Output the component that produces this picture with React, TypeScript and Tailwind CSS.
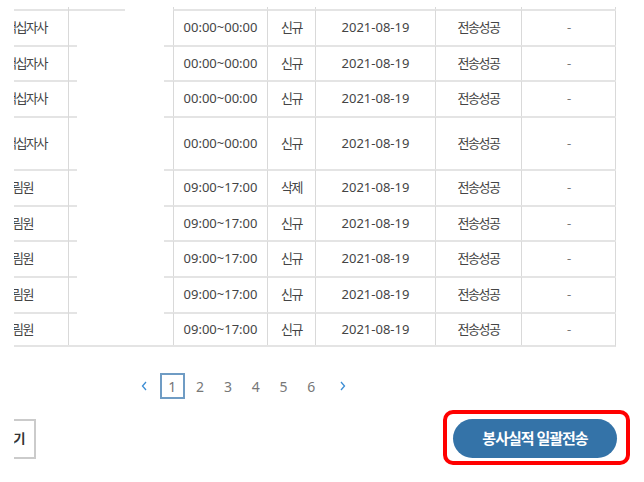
import React from "react";

type Row = { org: string; time: string; kind: string; h: string; pr: string; first?: boolean };

const rows: Row[] = [
  { org: "대한적십자사", time: "00:00~00:00", kind: "신규", h: "h-[36px]", pr: "pr-[21px]", first: true },
  { org: "대한적십자사", time: "00:00~00:00", kind: "신규", h: "h-[35px]", pr: "pr-[21px]" },
  { org: "대한적십자사", time: "00:00~00:00", kind: "신규", h: "h-[36px]", pr: "pr-[21px]" },
  { org: "대한적십자사", time: "00:00~00:00", kind: "신규", h: "h-[53px]", pr: "pr-[21px]" },
  { org: "효림원", time: "09:00~17:00", kind: "삭제", h: "h-[36px]", pr: "pr-[35px]" },
  { org: "효림원", time: "09:00~17:00", kind: "신규", h: "h-[35px]", pr: "pr-[35px]" },
  { org: "효림원", time: "09:00~17:00", kind: "신규", h: "h-[36px]", pr: "pr-[35px]" },
  { org: "효림원", time: "09:00~17:00", kind: "신규", h: "h-[36px]", pr: "pr-[35px]" },
  { org: "효림원", time: "09:00~17:00", kind: "신규", h: "h-[35px]", pr: "pr-[35px]" },
];

const cols = "grid grid-cols-[54px_105px_94px_48px_120px_86px_95px] border-r border-[#d9d9d9]";
const cell = "flex items-center justify-center border-l border-t-2 border-t-[#e4e4e4] border-l-[#d9d9d9]";
const ko = "tracking-[-1.5px]";

const Chevron = ({ left }: { left?: boolean }) => (
  <svg width="6" height="10" viewBox="0 0 6 10" className="text-[#3b8dd4]">
    <path d={left ? "M5 1 L1.5 5 L5 9" : "M1 1 L4.5 5 L1 9"} fill="none" stroke="currentColor" strokeWidth="1.3" />
  </svg>
);

export default function App() {
  return (
    <div
      className="w-[644px] h-[482px] bg-white overflow-hidden text-[13px] text-[#444]"
      style={{ fontFamily: '"Noto Sans", "Noto Sans CJK KR", sans-serif' }}
    >
      <div className="ml-[14px] w-[616px] overflow-hidden pt-[7px]">
        <div className="w-[602px]">
          <div className={`${cols} h-[2px]`}>
            <div />
            {[0, 1, 2, 3, 4, 5].map((i) => (
              <div key={i} className="border-l border-[#d9d9d9]" />
            ))}
          </div>
          {rows.map((r, i) => (
            <div key={i} className={`${cols} ${r.h} ${i === rows.length - 1 ? "border-b-2 border-b-[#e4e4e4]" : ""}`}>
              <div className="relative overflow-hidden border-t-2 border-t-[#e4e4e4]">
                <div className={`absolute right-0 top-0 bottom-0 w-[130px] flex items-center justify-end ${r.pr} whitespace-nowrap`}>
                  <span className={ko}>{r.org}</span>
                </div>
              </div>
              <div className="flex flex-col border-l border-[#d9d9d9]">
                <div className="flex justify-between h-[2px]">
                  <span className={`${r.first ? "w-[56px]" : "w-[8px]"} bg-[#e4e4e4]`} />
                  <span className={`${r.first ? "w-0" : "w-[9px]"} bg-[#e4e4e4]`} />
                </div>
              </div>
              <div className={cell}>{r.time}</div>
              <div className={cell}>
                <span className={ko}>{r.kind}</span>
              </div>
              <div className={cell}>2021-08-19</div>
              <div className={cell}>
                <span className={ko}>전송성공</span>
              </div>
              <div className={cell}>
                <span className="text-[#777]">-</span>
              </div>
            </div>
          ))}
        </div>

        <div className="mt-[26px] flex items-center h-[26px] w-[602px]">
          <div className="ml-[117px] flex items-center gap-[2.8px] text-[14px] text-[#777]">
            <div className="w-[25px] mr-[1px] flex justify-center">
              <Chevron left />
            </div>
            <div className="w-[25px] h-[26px] flex items-center justify-center border-2 border-[#6f9cc4]">1</div>
            {[2, 3, 4, 5, 6].map((n) => (
              <div key={n} className="w-[25px] h-[26px] flex items-center justify-center">
                {n}
              </div>
            ))}
            <div className="w-[25px] ml-[4px] flex justify-center">
              <Chevron />
            </div>
          </div>
        </div>

        <div className="mt-[11px] flex justify-between items-start w-[616px]">
          <div className="mt-[9px] -ml-[46px] h-[40px] flex items-center border-2 border-[#cbcbcb] pl-[12px] pr-[10px] font-bold text-[#333]">
            <span className={ko}>목록보기</span>
          </div>
          <div className="rounded-[10px] border-4 border-[#ff0000] pl-[6px] pt-[5px] pr-[9px] pb-[3px]">
            <div className="w-[164px] h-[39px] rounded-full bg-[#3473a8] flex items-center justify-center text-white text-[15px] font-bold">
              <span className="tracking-[-1px]">봉사실적 일괄전송</span>
            </div>
          </div>
        </div>
      </div>
    </div>
  );
}
